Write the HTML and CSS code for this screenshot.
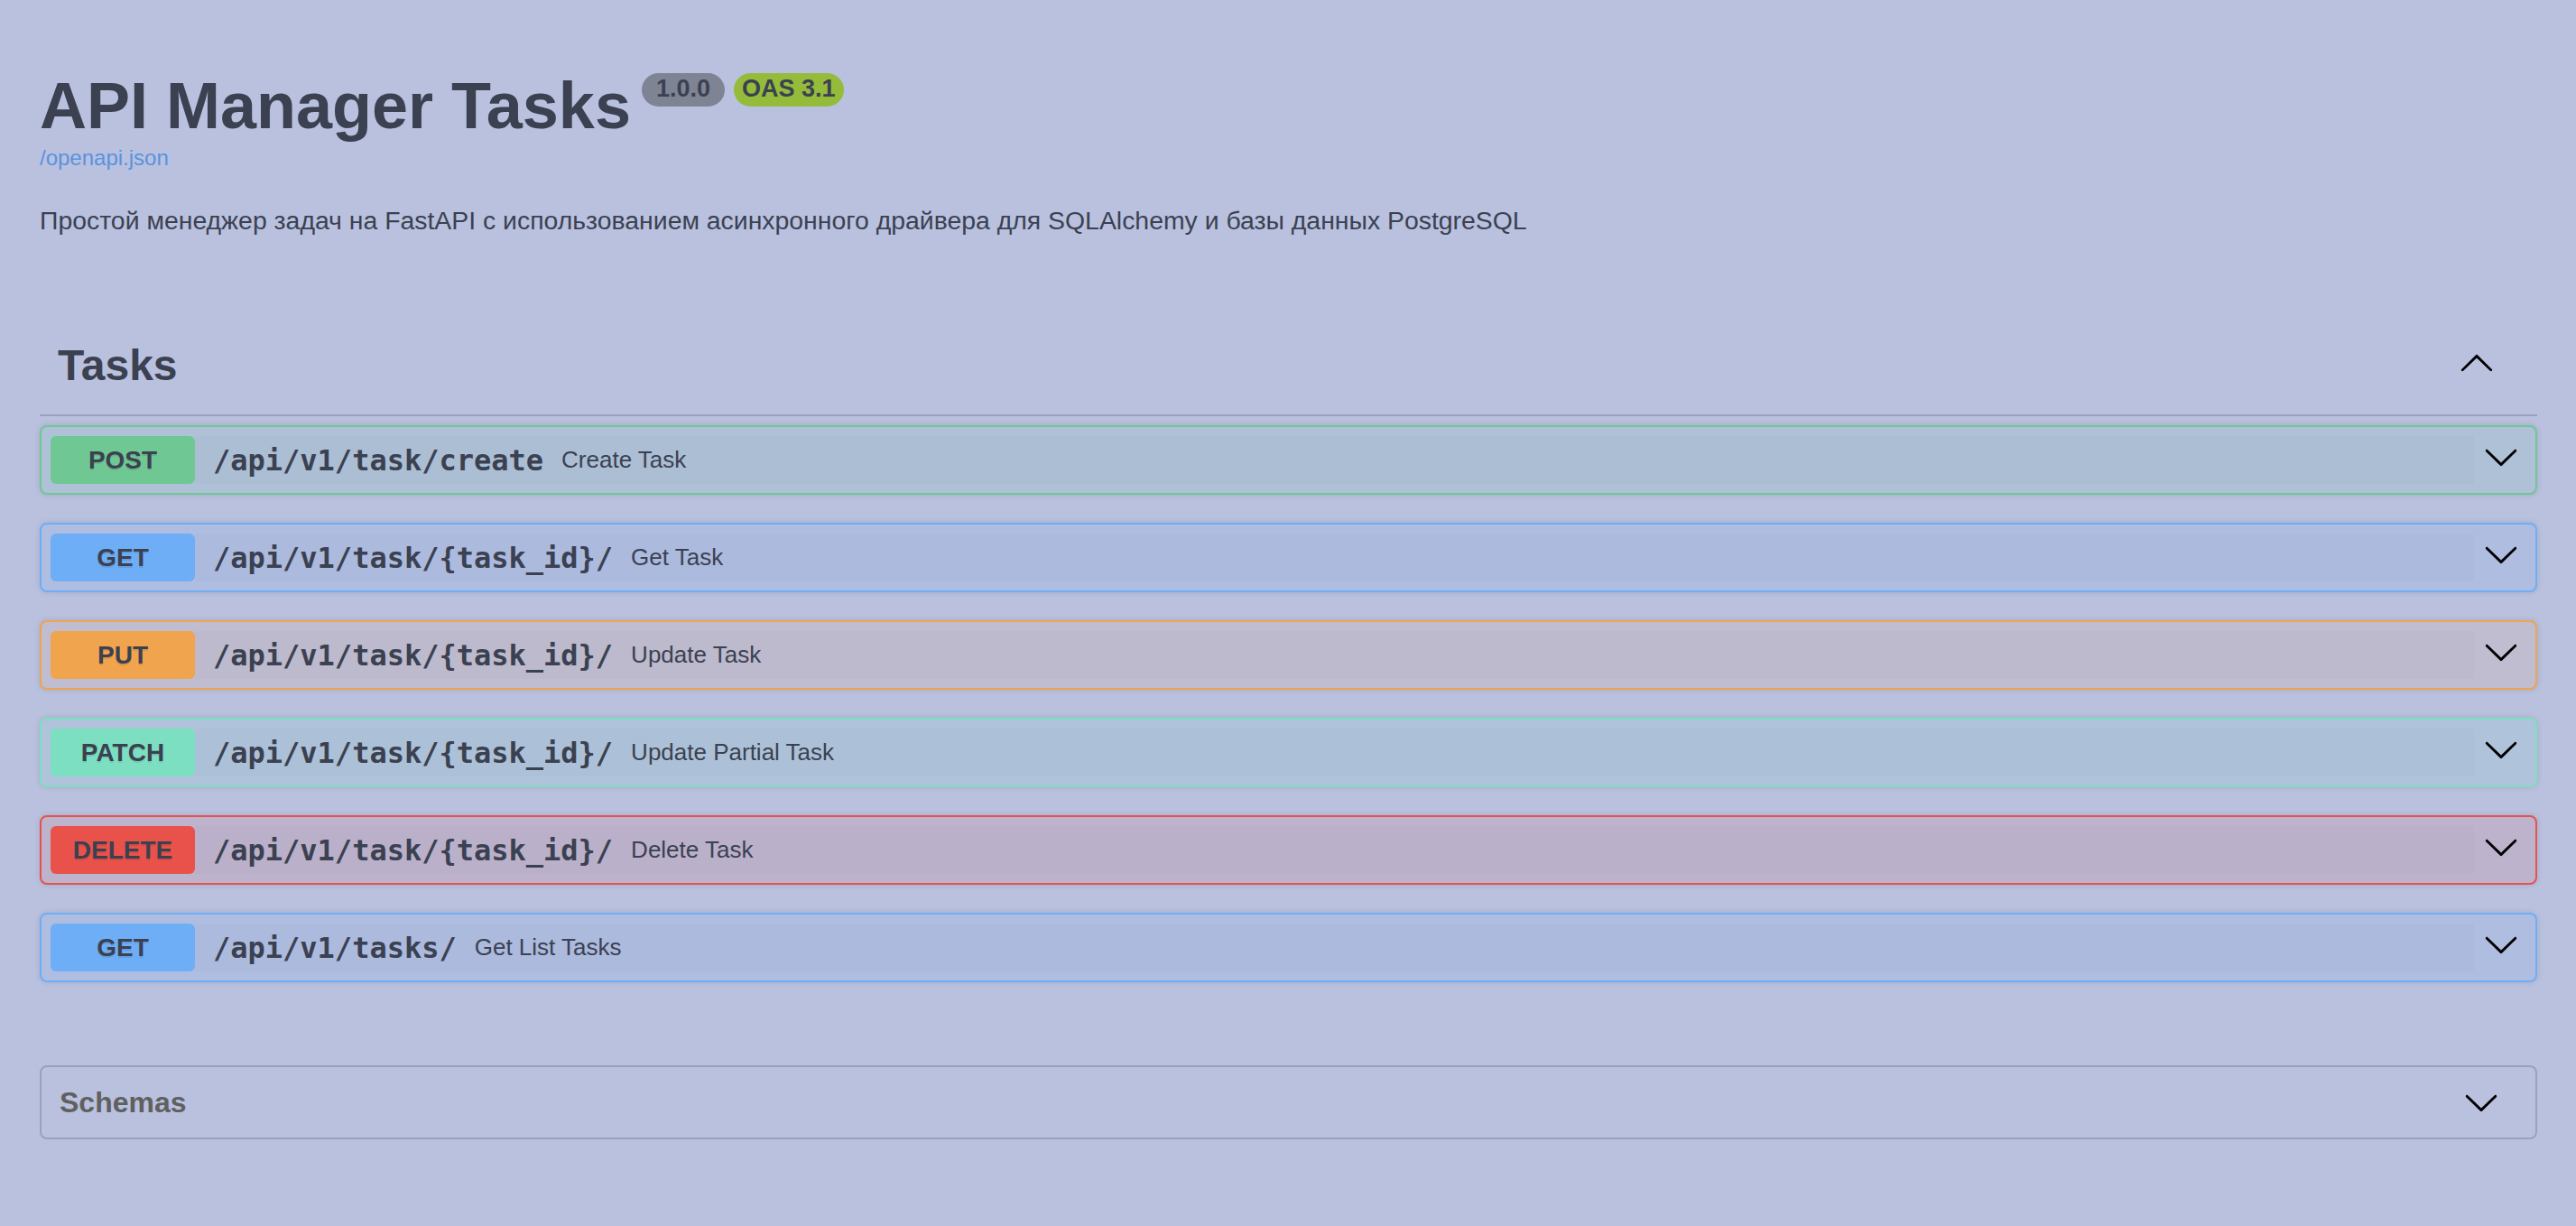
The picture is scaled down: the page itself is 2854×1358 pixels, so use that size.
FILE: index.html
```html
<!DOCTYPE html>
<html lang="ru">
<head>
<meta charset="utf-8">
<title>API Manager Tasks - Swagger UI</title>
<link rel="stylesheet" href="styles.css">
</head>
<body>
<div class="wrapper">
  <section class="info">
    <div class="title-row">
      <h1 class="title">API Manager Tasks</h1>
      <span class="badge badge-version">1.0.0</span>
      <span class="badge badge-oas">OAS 3.1</span>
    </div>
    <a class="spec-link" href="#">/openapi.json</a>
    <p class="description">Простой менеджер задач на FastAPI с использованием асинхронного драйвера для SQLAlchemy и базы данных PostgreSQL</p>
  </section>

  <section class="tag-section">
    <div class="tag-header">
      <h3 class="tag-name">Tasks</h3>
      <svg class="arrow arrow-up" viewBox="0 0 20 20" width="40" height="40"><path d="M17.418 14.908c.272.268.709.268.979 0s.271-.701 0-.969l-7.908-7.83c-.27-.268-.707-.268-.979 0l-7.908 7.83c-.27.268-.27.701 0 .969.271.268.709.268.979 0L10 7.758l7.418 7.15z"/></svg>
    </div>

    <div class="opblock op-post">
      <span class="method">POST</span>
      <div class="summary-control">
        <span class="path">/api/v1/task/create</span>
        <span class="summary">Create Task</span>
      </div>
      <svg class="arrow" viewBox="0 0 20 20" width="40" height="40"><path d="M17.418 6.109c.272-.268.709-.268.979 0s.271.701 0 .969l-7.908 7.83c-.27.268-.707.268-.979 0l-7.908-7.83c-.27-.268-.27-.701 0-.969.271-.268.709-.268.979 0L10 13.25l7.418-7.141z"/></svg>
    </div>

    <div class="opblock op-get">
      <span class="method">GET</span>
      <div class="summary-control">
        <span class="path">/api/v1/task/{task_id}/</span>
        <span class="summary">Get Task</span>
      </div>
      <svg class="arrow" viewBox="0 0 20 20" width="40" height="40"><path d="M17.418 6.109c.272-.268.709-.268.979 0s.271.701 0 .969l-7.908 7.83c-.27.268-.707.268-.979 0l-7.908-7.83c-.27-.268-.27-.701 0-.969.271-.268.709-.268.979 0L10 13.25l7.418-7.141z"/></svg>
    </div>

    <div class="opblock op-put">
      <span class="method">PUT</span>
      <div class="summary-control">
        <span class="path">/api/v1/task/{task_id}/</span>
        <span class="summary">Update Task</span>
      </div>
      <svg class="arrow" viewBox="0 0 20 20" width="40" height="40"><path d="M17.418 6.109c.272-.268.709-.268.979 0s.271.701 0 .969l-7.908 7.83c-.27.268-.707.268-.979 0l-7.908-7.83c-.27-.268-.27-.701 0-.969.271-.268.709-.268.979 0L10 13.25l7.418-7.141z"/></svg>
    </div>

    <div class="opblock op-patch">
      <span class="method">PATCH</span>
      <div class="summary-control">
        <span class="path">/api/v1/task/{task_id}/</span>
        <span class="summary">Update Partial Task</span>
      </div>
      <svg class="arrow" viewBox="0 0 20 20" width="40" height="40"><path d="M17.418 6.109c.272-.268.709-.268.979 0s.271.701 0 .969l-7.908 7.83c-.27.268-.707.268-.979 0l-7.908-7.83c-.27-.268-.27-.701 0-.969.271-.268.709-.268.979 0L10 13.25l7.418-7.141z"/></svg>
    </div>

    <div class="opblock op-delete">
      <span class="method">DELETE</span>
      <div class="summary-control">
        <span class="path">/api/v1/task/{task_id}/</span>
        <span class="summary">Delete Task</span>
      </div>
      <svg class="arrow" viewBox="0 0 20 20" width="40" height="40"><path d="M17.418 6.109c.272-.268.709-.268.979 0s.271.701 0 .969l-7.908 7.83c-.27.268-.707.268-.979 0l-7.908-7.83c-.27-.268-.27-.701 0-.969.271-.268.709-.268.979 0L10 13.25l7.418-7.141z"/></svg>
    </div>

    <div class="opblock op-get">
      <span class="method">GET</span>
      <div class="summary-control">
        <span class="path">/api/v1/tasks/</span>
        <span class="summary">Get List Tasks</span>
      </div>
      <svg class="arrow" viewBox="0 0 20 20" width="40" height="40"><path d="M17.418 6.109c.272-.268.709-.268.979 0s.271.701 0 .969l-7.908 7.83c-.27.268-.707.268-.979 0l-7.908-7.83c-.27-.268-.27-.701 0-.969.271-.268.709-.268.979 0L10 13.25l7.418-7.141z"/></svg>
    </div>
  </section>

  <section class="models">
    <h4 class="models-title">Schemas</h4>
    <svg class="arrow" viewBox="0 0 20 20" width="40" height="40"><path d="M17.418 6.109c.272-.268.709-.268.979 0s.271.701 0 .969l-7.908 7.83c-.27.268-.707.268-.979 0l-7.908-7.83c-.27-.268-.27-.701 0-.969.271-.268.709-.268.979 0L10 13.25l7.418-7.141z"/></svg>
  </section>
</div>
</body>
</html>
```

FILE: styles.css
```css
html, body {
  margin: 0;
  padding: 0;
}

body {
  background: #b9c1df;
  color: #3b4151;
  font-family: "Liberation Sans", Arial, sans-serif;
  min-height: 1358px;
}

.wrapper {
  padding: 0 43px 0 44px;
}

/* ---------- info ---------- */
.info {
  padding-top: 81px;
}

.title-row {
  display: flex;
  align-items: flex-start;
}

.title {
  margin: 0;
  font-size: 72px;
  line-height: 72px;
  font-weight: 700;
  color: #3b4151;
}

.badge {
  display: inline-block;
  height: 37px;
  box-sizing: border-box;
  border-radius: 57px;
  font-size: 27px;
  font-weight: 700;
  line-height: 35px;
  padding-bottom: 2px;
  color: #3b4151;
  margin-left: 10px;
}

.badge-version {
  background: #7e8494;
  padding-left: 16px;
  padding-right: 16px;
  margin-left: 12px;
}

.badge-oas {
  background: #94bc3a;
  padding-left: 9px;
  padding-right: 9px;
}

.spec-link {
  display: block;
  margin-top: 8px;
  font-size: 24px;
  line-height: 28px;
  color: #5a93dd;
  text-decoration: none;
}

.description {
  margin: 34px 0 0;
  font-size: 28.4px;
  line-height: 42px;
  color: #3b4151;
}

/* ---------- tag section ---------- */
.tag-section {
  margin-top: 99px;
}

.tag-header {
  display: flex;
  align-items: flex-start;
  justify-content: space-between;
  padding: 17px 47px 30px 20px;
  border-bottom: 2px solid #9ba1b8;
  margin-bottom: 10px;
}

.tag-name {
  margin: 0;
  font-size: 48px;
  line-height: 48px;
  font-weight: 700;
  color: #3b4151;
}

.arrow {
  display: block;
  flex: none;
  fill: #000;
}

/* ---------- op blocks ---------- */
.opblock {
  display: flex;
  align-items: center;
  box-sizing: border-box;
  height: 77px;
  padding: 0 18px 0 10px;
  border: 2px solid;
  border-radius: 8px;
  margin-bottom: 31px;
  box-shadow: 0 0 6px rgba(0, 0, 0, 0.12);
}

.method {
  flex: none;
  width: 160px;
  height: 53px;
  border-radius: 6px;
  display: flex;
  align-items: center;
  justify-content: center;
  font-size: 28px;
  font-weight: 700;
  color: #3b4151;
  text-shadow: 0 2px 0 rgba(0, 0, 0, 0.1);
}

.summary-control {
  flex: 1;
  display: flex;
  align-items: center;
  height: 53px;
  margin-right: 10px;
  background: rgba(59, 65, 81, 0.02);
}

.path {
  padding: 0 20px;
  font-family: "DejaVu Sans Mono", Menlo, monospace;
  font-size: 32px;
  font-weight: 700;
  color: #3b4151;
  white-space: nowrap;
}

.summary {
  font-size: 26px;
  color: #3b4151;
  white-space: nowrap;
}

.opblock .arrow {
  margin-bottom: 8px;
}

.op-post {
  border-color: #6fc894;
  background: #aec1d7;
}
.op-post .method { background: #6fc894; }

.op-get {
  border-color: #6eaef7;
  background: #afbde1;
}
.op-get .method { background: #6eaef7; }

.op-put {
  border-color: #f0a44d;
  background: #bfbdcf;
}
.op-put .method { background: #f0a44d; }

.op-patch {
  border-color: #7ddfc1;
  background: #afc4da;
}
.op-patch .method { background: #7ddfc1; }

.op-delete {
  border-color: #e8524b;
  background: #bdb3cd;
}
.op-delete .method { background: #e8524b; }

/* ---------- models ---------- */
.models {
  margin-top: 92px;
  box-sizing: border-box;
  height: 82px;
  display: flex;
  align-items: center;
  justify-content: space-between;
  padding: 0 40px 0 20px;
  border: 2px solid #9ba1b8;
  border-radius: 8px;
}

.models-title {
  margin: 0;
  font-size: 32px;
  line-height: 40px;
  font-weight: 700;
  color: #606060;
}
```
